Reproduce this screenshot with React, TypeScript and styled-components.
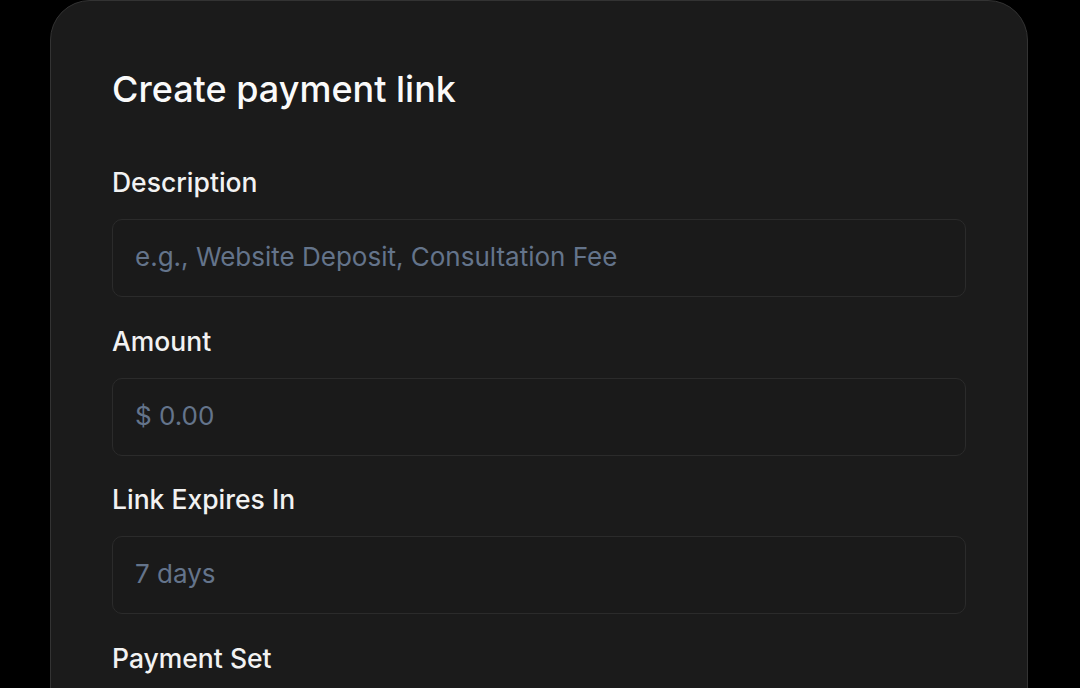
import React from "react";
import styled, { createGlobalStyle } from "styled-components";

const Global = createGlobalStyle`
  html, body { margin: 0; padding: 0; background: #000; }
  body { font-family: Inter, "Noto Sans", sans-serif; overflow: hidden; }
`;

const Page = styled.div`
  width: 1080px;
  height: 688px;
  background: #000;
  padding-left: 50px;
  box-sizing: border-box;
  overflow: hidden;
`;

const Card = styled.div`
  width: 978px;
  min-height: 760px;
  box-sizing: border-box;
  background: #1b1b1b;
  border: 1.5px solid #333333;
  border-radius: 40px;
  padding: 66px 61px 40px;
  display: flex;
  flex-direction: column;
`;

const Title = styled.h1`
  margin: 0 0 56px;
  font-size: 36px;
  line-height: 44px;
  font-weight: 500;
  color: #fafafa;
  letter-spacing: 0;
`;

const Fields = styled.div`
  display: flex;
  flex-direction: column;
  gap: 28.5px;
`;

const Field = styled.div`
  display: flex;
  flex-direction: column;
  gap: 22px;
`;

const Label = styled.label`
  font-size: 26.5px;
  line-height: 30px;
  font-weight: 500;
  color: #f2f2f2;
`;

const Input = styled.div`
  height: 78px;
  box-sizing: border-box;
  border: 1.5px solid #2b2b2b;
  border-radius: 10px;
  background: #1a1a1a;
  padding: 0 22px 3px;
  display: flex;
  align-items: center;
  font-size: 26px;
  color: #64748b;
`;

const fields = [
  { label: "Description", placeholder: "e.g., Website Deposit, Consultation Fee" },
  { label: "Amount", placeholder: "$ 0.00" },
  { label: "Link Expires In", placeholder: "7 days" },
  { label: "Payment Set", placeholder: "" },
];

export default function App() {
  return (
    <>
      <Global />
      <Page>
        <Card>
          <Title>Create payment link</Title>
          <Fields>
            {fields.map((f) => (
              <Field key={f.label}>
                <Label>{f.label}</Label>
                <Input>{f.placeholder}</Input>
              </Field>
            ))}
          </Fields>
        </Card>
      </Page>
    </>
  );
}
